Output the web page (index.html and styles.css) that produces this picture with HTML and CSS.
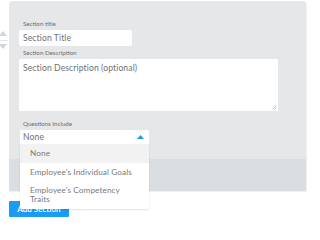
FILE: index.html
```html
<!DOCTYPE html>
<html>
<head>
<meta charset="utf-8">
<link rel="stylesheet" href="styles.css">
</head>
<body>
<div class="page">
  <div class="row">
    <div class="handle">
      <svg class="tri" width="9" height="5" viewBox="0 0 9 5"><path d="M0 5 L4 0 L8 5 Z" fill="#d3d6d9"/></svg>
      <div class="handle-sep"></div>
      <svg class="tri" width="9" height="5" viewBox="0 0 9 5"><path d="M0 0 L8 0 L4 5 Z" fill="#d3d6d9"/></svg>
    </div>
    <div class="card">
      <div class="card-body">
        <label class="lbl">Section title</label>
        <div class="input title-input">Section Title</div>
        <label class="lbl">Section Description</label>
        <div class="input textarea">Section Description (optional)
          <svg class="grip" width="5" height="5" viewBox="0 0 5 5"><path d="M4.5 0.5 L0.5 4.5 M4.5 2.5 L2.5 4.5" stroke="#b8b8b8" stroke-width="0.8"/></svg>
        </div>
        <label class="lbl">Questions Include</label>
        <div class="select-wrap">
          <div class="input select">
            <span>None</span>
            <svg width="7" height="4" viewBox="0 0 7 4"><path d="M0 4 L3.5 0 L7 4 Z" fill="#1a9bf0"/></svg>
          </div>
          <ul class="menu">
            <li class="item active">None</li>
            <li class="item">Employee's Individual Goals</li>
            <li class="item">Employee's Competency Traits</li>
          </ul>
        </div>
      </div>
      <div class="card-foot"></div>
    </div>
  </div>
  <button class="btn">Add Section</button>
</div>
</body>
</html>
```
FILE: styles.css
```css
html, body { margin: 0; padding: 0; background: #fff; }
body { font-family: Lato, "Open Sans", sans-serif; color: #6b6e71; }
.page { padding-top: 1px; }
.row { display: flex; }
.handle { width: 9px; display: flex; flex-direction: column; align-items: flex-start; padding-top: 30px; margin-left: -1px; margin-right: 1px; }
.tri { display: block; }
.handle-sep { height: 1px; width: 9px; background: #e3e5e7; margin: 4px 0 3px; }
.card { width: 297px; height: 190px; background: #e6e7e9; border-radius: 3px 3px 0 0; display: flex; flex-direction: column; box-shadow: 1px 1px 0 #eef0f1; }
.card-body { flex: 1; padding: 19px 0 0 10px; display: flex; flex-direction: column; align-items: flex-start; }
.card-foot { height: 32px; background: #dbdee1; }
.lbl { font-size: 6.2px; line-height: 8px; color: #6a6c6f; padding-left: 4px; margin-bottom: 2px; }
.input { background: #fff; border-radius: 2px; font-size: 8.6px; color: #6e7174; box-sizing: border-box; padding-left: 4px; letter-spacing: 0.1px; }
.title-input { width: 113px; height: 16px; line-height: 16px; margin-bottom: 3px; }
.textarea { width: 259px; height: 52px; padding-top: 4px; line-height: 10px; position: relative; border-radius: 0; margin-bottom: 9px; }
.grip { position: absolute; right: 1px; bottom: 1px; }
.select-wrap { position: relative; margin-left: 1px; }
.select { width: 129px; height: 14px; display: flex; align-items: center; justify-content: space-between; padding: 0 5px 0 3px; border-radius: 1px; }
.menu { position: absolute; left: 0; top: 14px; width: 129px; margin: 0; padding: 0; list-style: none; background: #fff; z-index: 5; box-shadow: 0 1px 2px rgba(0,0,0,0.12); border-radius: 0 0 2px 2px; }
.item { font-size: 8.2px; line-height: 9px; padding: 5px 10px; color: #76797c; letter-spacing: 0.1px; }
.item:last-child { padding: 4px 10px 5px; }
.item.active { background: #f2f2f2; }
.btn { display: block; margin: 10px 0 0 9px; width: 60px; height: 16px; border: 0; border-radius: 1px; background: #1a9bf4; color: #fff; font-family: Lato, sans-serif; font-weight: 700; font-size: 8px; padding: 0; }
```
